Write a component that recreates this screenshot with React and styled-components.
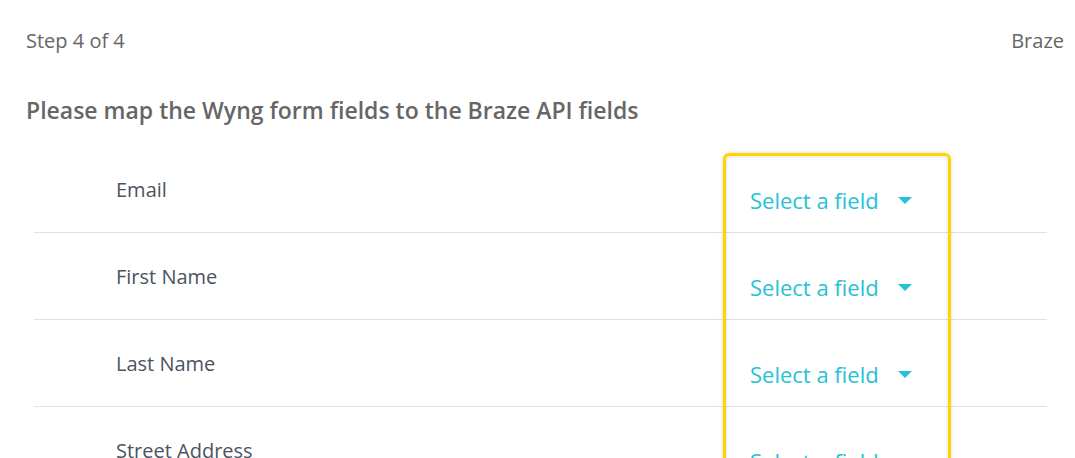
import React from 'react'
import styled, { createGlobalStyle } from 'styled-components'

const GlobalStyle = createGlobalStyle`
  html, body {
    margin: 0;
    padding: 0;
    background: #ffffff;
    overflow: hidden;
  }
  body {
    font-family: "Open Sans", Lato, sans-serif;
  }
`

const Page = styled.div`
  width: 1075px;
  height: 458px;
  box-sizing: border-box;
  padding: 28px 11px 0 26px;
  overflow: hidden;
`

const TopBar = styled.div`
  display: flex;
  justify-content: space-between;
  align-items: center;
  height: 24px;
  font-size: 20px;
  color: #666666;
`

const Heading = styled.h2`
  margin: 46px 0 0 0;
  font-size: 23px;
  font-weight: 600;
  color: #666666;
  line-height: 24px;
`

const Mapping = styled.div`
  position: relative;
  margin: 24px 17px 0 8px;
`

const Row = styled.div`
  display: grid;
  grid-template-columns: 1fr 324px;
  height: 87px;
  box-sizing: border-box;
  border-bottom: 1px solid #e2e2e2;
`

const Label = styled.div`
  padding: 32px 0 0 82px;
  font-size: 20px;
  line-height: 24px;
  color: #4b5361;
`

const Select = styled.div`
  display: flex;
  align-items: center;
  gap: 19px;
  padding: 42px 0 0 27px;
  height: 24px;
  font-size: 22px;
  color: #25c2d4;
  cursor: pointer;
`

const Caret = styled.svg`
  width: 14px;
  height: 7px;
  fill: #25c2d4;
`

const Highlight = styled.div`
  position: absolute;
  top: 7px;
  left: 689px;
  width: 228px;
  height: 340px;
  box-sizing: border-box;
  border: 3.5px solid #ffd500;
  border-radius: 6px;
  box-shadow: inset 0 0 4px rgba(0, 0, 0, 0.15), 0 0 4px rgba(0, 0, 0, 0.15);
  pointer-events: none;
`

const fields = ['Email', 'First Name', 'Last Name', 'Street Address']

export default function App() {
  return (
    <>
      <GlobalStyle />
      <Page>
        <TopBar>
          <span>Step 4 of 4</span>
          <span>Braze</span>
        </TopBar>
        <Heading>Please map the Wyng form fields to the Braze API fields</Heading>
        <Mapping>
          {fields.map((f) => (
            <Row key={f}>
              <Label>{f}</Label>
              <Select>
                <span>Select a field</span>
                <Caret viewBox="0 0 14 7">
                  <path d="M0 0h14L7 7z" />
                </Caret>
              </Select>
            </Row>
          ))}
          <Highlight />
        </Mapping>
      </Page>
    </>
  )
}
